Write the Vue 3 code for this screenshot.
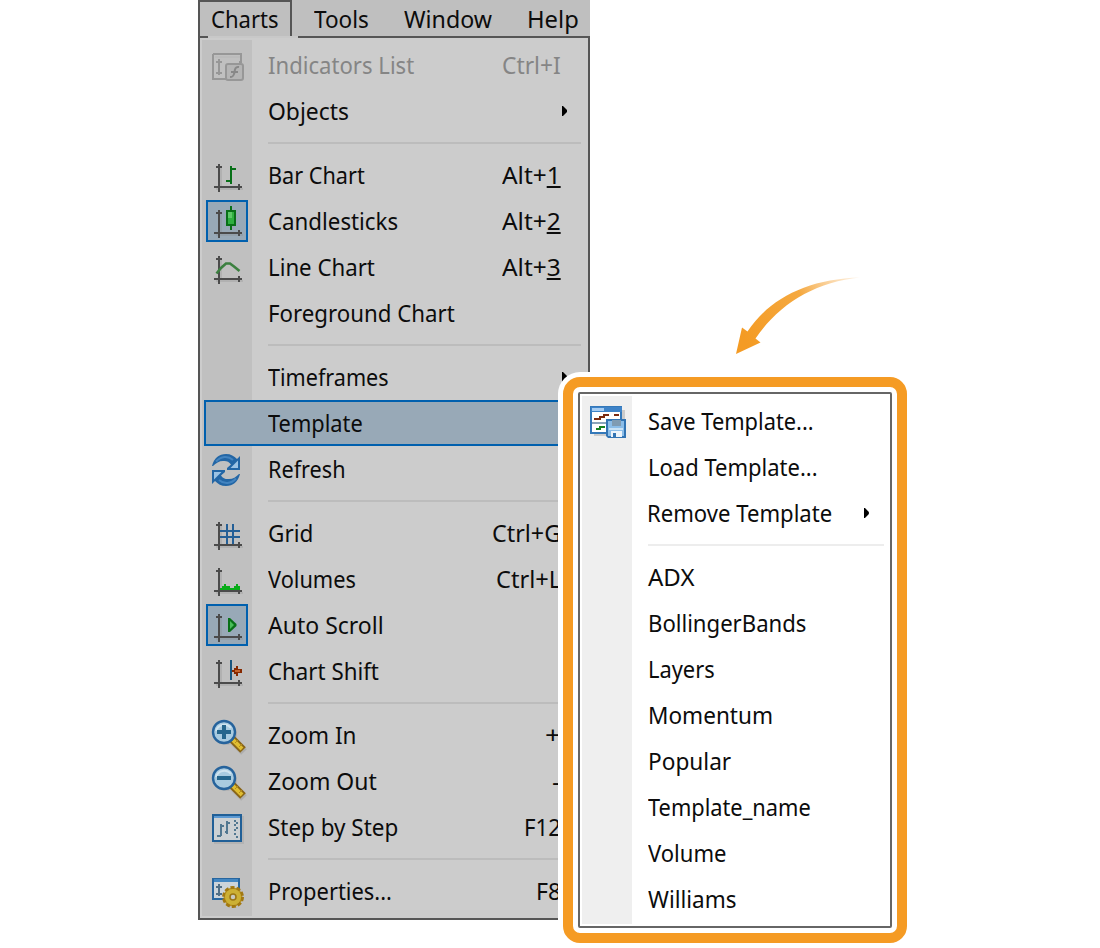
<script setup>
// Stretches a label horizontally to the given pixel width.
const vFit = {
  mounted(el, { value }) {
    if (value) el.style.transform = `scaleX(${value / el.offsetWidth})`
  }
}

const tabs = [
  { label: 'Charts', w: 68, cls: 'open' },
  { label: 'Tools', w: 54.5, cls: 'tools' },
  { label: 'Window', w: 88, cls: 'window' },
  { label: 'Help', w: 51.5, cls: 'help' }
]

const main = [
  { label: 'Indicators List', w: 146.5, key: ['Ctrl+I'], kw: 59, icon: 'indicators', disabled: true },
  { label: 'Objects', w: 81, arrow: true },
  { sep: true },
  { label: 'Bar Chart', w: 96.5, key: ['Alt+', '1'], kw: 59, icon: 'bar', axis: true },
  { label: 'Candlesticks', w: 130, key: ['Alt+', '2'], kw: 59, icon: 'candle', axis: true, on: true },
  { label: 'Line Chart', w: 106.5, key: ['Alt+', '3'], kw: 59, icon: 'line', axis: true },
  { label: 'Foreground Chart', w: 186.5 },
  { sep: true },
  { label: 'Timeframes', w: 120.5, arrow: true },
  { label: 'Template', w: 94.5, active: true },
  { label: 'Refresh', w: 77.5, icon: 'refresh' },
  { sep: true },
  { label: 'Grid', w: 45, key: ['Ctrl+G'], kw: 69, icon: 'grid', axis: true },
  { label: 'Volumes', w: 88, key: ['Ctrl+L'], kw: 65, icon: 'volumes', axis: true },
  { label: 'Auto Scroll', w: 116, icon: 'auto', axis: true, on: true },
  { label: 'Chart Shift', w: 110.5, icon: 'shift', axis: true },
  { sep: true },
  { label: 'Zoom In', w: 88, key: ['+'], kw: 16, icon: 'zoomin' },
  { label: 'Zoom Out', w: 109, key: ['-'], kw: 9, icon: 'zoomout' },
  { label: 'Step by Step', w: 130, key: ['F12'], kw: 37, icon: 'step' },
  { sep: true },
  { label: 'Properties...', w: 124, key: ['F8'], kw: 25, icon: 'props' }
]

const sub = [
  { label: 'Save Template...', w: 165.5, icon: 'save' },
  { label: 'Load Template...', w: 169.5 },
  { label: 'Remove Template', w: 185, arrow: true },
  { sep: true },
  { label: 'ADX', w: 46 },
  { label: 'BollingerBands', w: 158.5 },
  { label: 'Layers', w: 66.5 },
  { label: 'Momentum', w: 125 },
  { label: 'Popular', w: 83 },
  { label: 'Template_name', w: 162.5 },
  { label: 'Volume', w: 78 },
  { label: 'Williams', w: 89 }
]
</script>

<template>
  <div class="page">
    <div class="app">
      <nav class="bar">
        <div v-for="t in tabs" :key="t.label" class="tab" :class="t.cls"><span v-fit="t.w" class="fit">{{ t.label }}</span></div>
      </nav>
      <div class="menu">
        <template v-for="(r, i) in main" :key="i">
          <div v-if="r.sep" class="sep"></div>
          <div v-else class="row" :class="{ disabled: r.disabled, active: r.active }">
            <div class="icon" :class="{ on: r.on }">
              <svg v-if="r.icon" width="42" height="42" viewBox="0 0 42 42">
                <g v-if="r.axis" shape-rendering="crispEdges">
                  <path d="M15 12v20M10 35h27" stroke="#888" stroke-width="2" opacity=".25" />
                  <path d="M13 10v28M8 33h28" stroke="#4b4b4b" stroke-width="2" />
                  <path d="M10 13h6M33 30v6" stroke="#4b4b4b" stroke-width="2" />
                </g>
                <g v-if="r.icon === 'bar'" stroke="#087018" stroke-width="2" fill="none" shape-rendering="crispEdges">
                  <path d="M25 12v18M25 15h5M20 27h5" />
                </g>
                <g v-else-if="r.icon === 'candle'" shape-rendering="crispEdges">
                  <path d="M25 6v24" stroke="#087018" stroke-width="2" />
                  <rect x="21" y="11" width="8" height="14" fill="#2eb040" stroke="#087018" stroke-width="2" />
                  <path d="M22 12h4v6h-4z" fill="#5cc868" />
                </g>
                <path v-else-if="r.icon === 'line'" d="M10.500 27.500L15 22L20 17.500H24L28 20.500L33.500 25" fill="none" stroke="#3c8040" stroke-width="2.600" />
                <g v-else-if="r.icon === 'refresh'">
                  <g v-for="a in [0, 180]" :key="a" :transform="`rotate(${a} 20 22)`">
                    <path d="M6 18C8 10 13 6 20 6c5 0 8 2 11 5l3-3v14H21v-2l4-3.500c-2-3-5-4-8-3.500-4 0-7 2-10 5z" fill="#2366a5" />
                    <path d="M32 12.500V20h-7.500l3.500-3.500z" fill="#9cc3e4" />
                    <path d="M10 13.500c5-5.500 12-6 17-1.500" stroke="#4384c0" stroke-width="2" fill="none" />
                  </g>
                </g>
                <path v-else-if="r.icon === 'grid'" d="M21 12v20M27 12v20M14 19h20M14 25h20" stroke="#245f96" stroke-width="2" shape-rendering="crispEdges" />
                <path v-else-if="r.icon === 'volumes'" d="M14 32v-2h2v-2h2v-2h2v2h4v2h4v-2h2v-2h2v2h2v4z" fill="#08ac18" shape-rendering="crispEdges" />
                <g v-else-if="r.icon === 'auto'">
                  <path d="M22 14v14h2l6.500-6v-2l-6.500-6z" fill="#087018" />
                  <path d="M24 17v8l4-4z" fill="#48bd58" />
                </g>
                <g v-else-if="r.icon === 'shift'" shape-rendering="crispEdges">
                  <path d="M25 10v20" stroke="#185680" stroke-width="2" />
                  <path d="M26 20h2v-2h2v-2h2v3h4v4h-4v3h-2v-2h-2v-2h-2z" fill="#862900" />
                  <path d="M29 20h5v2h-5z" fill="#c8642c" />
                </g>
                <g v-else-if="r.icon === 'zoomin' || r.icon === 'zoomout'">
                  <circle cx="20" cy="20" r="11" fill="#888" opacity=".25" />
                  <path d="M28 28l10 10" stroke="#777" stroke-width="8" opacity=".25" />
                  <path d="M26 25l11 11" stroke="#896516" stroke-width="8" />
                  <path d="M27 26l9 9" stroke="#dfbd31" stroke-width="4" />
                  <path d="M29 29l3-3M33 33l3-3" stroke="#b78d1b" stroke-width="1" />
                  <circle cx="18" cy="18" r="11" fill="#a9cbe0" stroke="#26639c" stroke-width="2.400" />
                  <path d="M10 17c2-7 11-8 15-3" stroke="#d0e4ef" stroke-width="2" fill="none" />
                  <path d="M11 18h14" stroke="#26668d" stroke-width="4" />
                  <path v-if="r.icon === 'zoomin'" d="M18 11v14" stroke="#26668d" stroke-width="4" />
                </g>
                <g v-else-if="r.icon === 'step'" shape-rendering="crispEdges">
                  <path d="M8 10h30v28H8z" fill="#aaa" opacity=".6" />
                  <rect x="7" y="9" width="28" height="26" fill="#ccd1d4" stroke="#205f97" stroke-width="2" />
                  <path d="M8 11h26" stroke="#5b99d3" stroke-width="2" />
                  <path d="M15 18v12M11 30h4M15 20h3M21 15v13M19 26h2M21 17h3" stroke="#527891" stroke-width="2" />
                  <path d="M28 14h2v2h-2zM30 16h2v2h-2zM28 18h2v2h-2zM28 23h2v2h-2zM30 21h2v2h-2zM28 27h2v2h-2zM30 30h2v2h-2z" fill="#527891" />
                </g>
                <g v-else-if="r.icon === 'indicators'" stroke="#979797" fill="none" stroke-width="2">
                  <path d="M7 10h28v8h-2M7 10v25h13" />
                  <path d="M9 13h25" stroke="#bbb" />
                  <path d="M13 15v16M10 18h6M10 29h6" />
                  <rect x="20" y="20" width="17" height="16" rx="2" fill="#b5b5b5" />
                  <path d="M33 23c-5-1-4 5-5 7-1 3-2 3-4 3M25 28h7" stroke="#888" />
                </g>
                <g v-else-if="r.icon === 'props'">
                  <rect x="7" y="9" width="26" height="20" fill="#ccd4da" stroke="#27669f" stroke-width="2" />
                  <path d="M8 10.500h24" stroke="#4387c2" stroke-width="3" />
                  <path d="M13 14v12M10 17h6M10 24h6" stroke="#506f86" stroke-width="2" />
                  <circle cx="27" cy="27" r="9.500" fill="#b89220" stroke="#a27811" stroke-width="3" stroke-dasharray="4 2" />
                  <circle cx="27" cy="27" r="8" fill="#ccb034" />
                  <circle cx="27" cy="27" r="3" fill="#c8c8c0" stroke="#9a7515" stroke-width="1.500" />
                </g>
              </svg>
            </div>
            <div class="label"><span v-fit="r.w" class="fit">{{ r.label }}</span></div>
            <div v-if="r.key" class="key"><span v-fit="r.kw" class="fit right">{{ r.key[0] }}<u v-if="r.key[1]">{{ r.key[1] }}</u></span></div>
            <svg v-if="r.arrow" class="tri" width="7" height="12" viewBox="0 0 7 12"><path d="M1 1h1l4 4v2l-4 4H1z" /></svg>
          </div>
        </template>
      </div>
    </div>

    <svg class="pointer" width="130" height="84" viewBox="732 274 130 84">
      <defs>
        <linearGradient id="fade" gradientUnits="userSpaceOnUse" x1="745" y1="340" x2="858" y2="278">
          <stop offset="0" stop-color="#f49b24" />
          <stop offset=".55" stop-color="#f5a940" />
          <stop offset="1" stop-color="#f8bc70" stop-opacity=".2" />
        </linearGradient>
      </defs>
      <path d="M736 354L742 327.500L747.500 331.500C770 298 808 279 860 277.500C815 282 779 304 755.500 338.500L760.500 342.500Z" fill="url(#fade)" />
    </svg>

    <div class="frame">
      <div class="submenu">
        <template v-for="(r, i) in sub" :key="i">
          <div v-if="r.sep" class="sep"></div>
          <div v-else class="row">
            <div class="icon">
              <svg v-if="r.icon" width="42" height="42" viewBox="0 0 42 42">
                <path d="M8 10h31v26H8z" fill="#777" opacity=".3" />
                <rect x="5" y="7" width="30" height="26" fill="#fff" stroke="#3478b9" stroke-width="2" />
                <path d="M5 7h31v5H5z" fill="#3e83c8" />
                <path d="M6 8h12v3H6z" fill="#a7cdf2" />
                <path d="M8 19h6v-2h4v-2h5M28 15h5" stroke="#7b2b10" stroke-width="2" fill="none" />
                <path d="M6 23h14" stroke="#8aa5bb" stroke-width="2" />
                <path d="M10 29h4v-2h5" stroke="#178020" stroke-width="2" fill="none" />
                <path d="M20 19h20v19H22l-2-2z" fill="#3274b3" />
                <path d="M22 21h16v15H22z" fill="#8bbde8" />
                <path d="M26 20h9v6h-9z" fill="#7f9bb2" />
                <path d="M23 28h14v2H23z" fill="#c9e2f5" />
                <path d="M25 31h11v6H25z" fill="#edf4fa" />
                <path d="M27 33h3v4h-3z" fill="#3274b3" />
              </svg>
            </div>
            <div class="label"><span v-fit="r.w" class="fit">{{ r.label }}</span></div>
            <svg v-if="r.arrow" class="tri" width="7" height="12" viewBox="0 0 7 12"><path d="M1 1h1l4 4v2l-4 4H1z" /></svg>
          </div>
        </template>
      </div>
    </div>
  </div>
</template>

<style>
body { background: #fff; overflow: hidden; }
</style>

<style scoped>
.page {
  position: relative;
  width: 1100px;
  height: 948px;
  overflow: hidden;
  font: 24px/46px "Noto Sans", sans-serif;
  color: #0c0c0c;
}
.app { width: 392px; margin-left: 198px; }
.fit { display: inline-block; white-space: pre; transform-origin: 0 50%; }
.fit.right { transform-origin: 100% 50%; }
.bar {
  display: flex;
  box-sizing: border-box;
  height: 36px;
  background: #bfbfbf;
  line-height: 37px;
}
.tab { box-sizing: border-box; height: 36px; }
.tab.open { width: 94px; padding-left: 11px; border: 2px solid #555; border-bottom: 0; line-height: 33px; }
.tab.tools { width: 90px; padding-left: 22px; }
.tab.window { width: 120px; padding-left: 22px; }
.tab.help { width: 88px; padding-left: 25px; }
.menu {
  position: relative;
  box-sizing: border-box;
  height: 884px;
  padding: 4px 7px 4px 4px;
  border: 2px solid #555;
  background: linear-gradient(#c0c0c0, #c0c0c0) 2px 2px / 50px 876px no-repeat #ccc;
}
/* the open tab joins the menu below it */
.menu::before {
  content: "";
  position: absolute;
  left: 8px;
  top: -2px;
  width: 90px;
  height: 2px;
  background: #c8c8c8;
}
.row { display: flex; box-sizing: border-box; height: 46px; position: relative; }
.row.disabled { color: #858585; }
.row.active::before {
  content: "";
  position: absolute;
  inset: 0 2px 0 0;
  border: 2px solid #0060ae;
  background: #98a9b7;
}
.label { position: relative; width: 220px; margin-left: 20px; }
.icon { position: relative; box-sizing: border-box; width: 42px; height: 42px; margin: 2px 0 0 2px; }
.icon.on { background: #98a9b7; outline: 2px solid #0060ae; outline-offset: -2px; }
.icon svg { display: block; }
.key { margin-left: auto; margin-right: 20px; }
.key u { text-underline-offset: 2px; text-decoration-thickness: 2px; }
.tri { margin: 17px 13px 0 auto; }
.sep { height: 2px; margin: 8px 0 8px 64px; background: #bcbcbc; }
.pointer { position: absolute; left: 732px; top: 274px; }
.frame {
  position: absolute;
  left: 563px;
  top: 377px;
  box-sizing: border-box;
  width: 344px;
  height: 566px;
  padding: 5px;
  border: 10px solid #f59b24;
  border-radius: 17px;
  background: #fff;
  box-shadow: 0 0 0 5px #fff;
}
.submenu {
  box-sizing: border-box;
  width: 314px;
  height: 536px;
  padding: 4px 6px 4px 4px;
  border: 2px solid #666;
  border-radius: 2px;
  background: linear-gradient(#efefef, #efefef) 2px 2px / 50px 528px no-repeat #fff;
}
.submenu .sep { background: #ededed; }
.submenu .tri { margin-right: 14px; }
</style>
